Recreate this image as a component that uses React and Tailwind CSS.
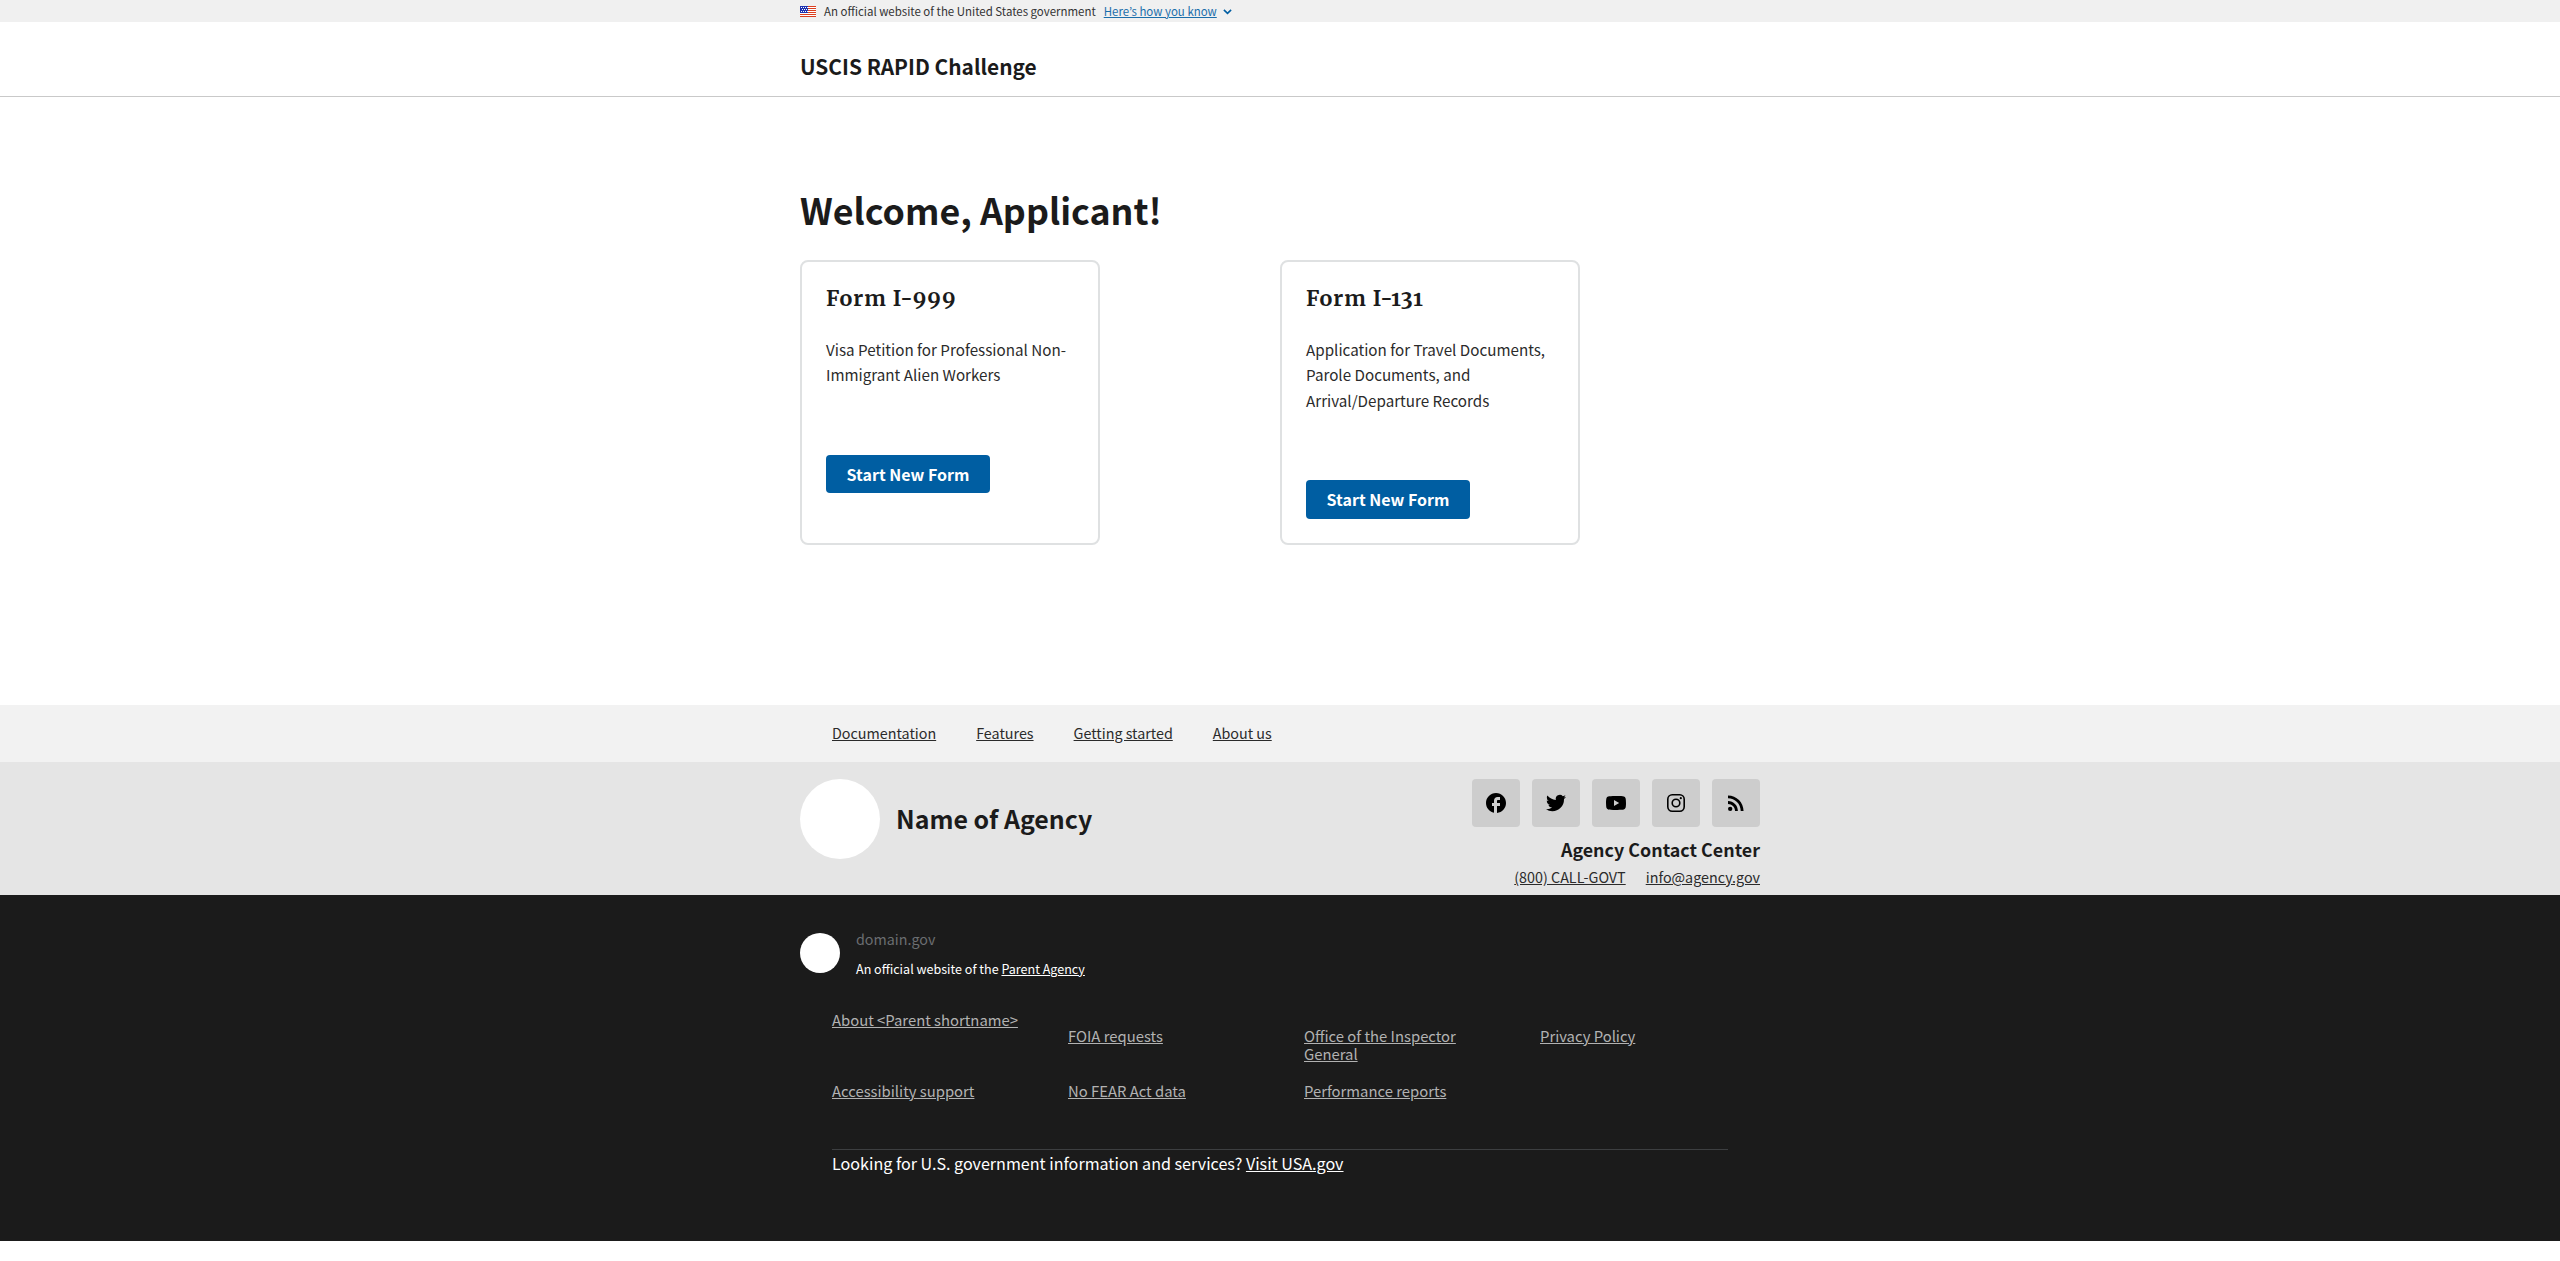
import clsx from "clsx";

const footerNav = ["Documentation", "Features", "Getting started", "About us"];

const requiredLinks = [
  { label: "About <Parent shortname>", first: true },
  { label: "FOIA requests" },
  { label: "Office of the Inspector General" },
  { label: "Privacy Policy" },
  { label: "Accessibility support" },
  { label: "No FEAR Act data" },
  { label: "Performance reports" },
];

const forms = [
  { id: "999", text: "Visa Petition for Professional Non-Immigrant Alien Workers" },
  { id: "131", text: "Application for Travel Documents, Parole Documents, and Arrival/Departure Records" },
];

function Flag() {
  const stars = [
    [1, 1], [3, 1], [5, 1], [7, 1],
    [2, 3], [4, 3], [6, 3],
    [1, 5], [3, 5], [5, 5], [7, 5],
  ];
  return (
    <svg width="16" height="11" viewBox="0 0 16 11" shapeRendering="crispEdges" aria-hidden="true">
      <rect width="16" height="11" fill="#fff" />
      {[0, 2, 4, 6, 8, 10].map((y) => (
        <rect key={y} y={y} width="16" height="1" fill="#db3e1f" />
      ))}
      <rect width="8" height="7" fill="#1e33b1" />
      {stars.map(([x, y]) => (
        <rect key={x + "-" + y} x={x} y={y} width="1" height="1" fill="#fff" />
      ))}
    </svg>
  );
}

const icons = {
  Facebook: (
    <path d="M22 12c0-5.52-4.48-10-10-10S2 6.48 2 12c0 4.84 3.44 8.87 8 9.8V15H8v-3h2V9.5C10 7.57 11.57 6 13.5 6H16v3h-2c-.55 0-1 .45-1 1v2h3v3h-3v6.95c5.05-.5 9-4.76 9-9.95z" />
  ),
  Twitter: (
    <path d="M22 5.8a8.49 8.49 0 0 1-2.36.64 4.13 4.13 0 0 0 1.81-2.27 8.21 8.21 0 0 1-2.61 1 4.1 4.1 0 0 0-7 3.74 11.64 11.64 0 0 1-8.45-4.29 4.16 4.16 0 0 0-.55 2.07 4.09 4.09 0 0 0 1.82 3.41 4.05 4.05 0 0 1-1.86-.51v.05a4.1 4.1 0 0 0 3.3 4 3.93 3.93 0 0 1-1.1.17 4.9 4.9 0 0 1-.77-.07 4.11 4.11 0 0 0 3.83 2.84A8.22 8.22 0 0 1 3 18.34a7.93 7.93 0 0 1-1-.06 11.57 11.57 0 0 0 6.29 1.85A11.59 11.59 0 0 0 20 8.45v-.53a8.43 8.43 0 0 0 2-2.12z" />
  ),
  YouTube: (
    <path d="M10 15l5.19-3L10 9v6m11.56-7.83c.13.47.22 1.1.28 1.9.07.8.1 1.49.1 2.09L22 12c0 2.19-.16 3.8-.44 4.83-.25.9-.83 1.48-1.73 1.73-.47.13-1.33.22-2.65.28-1.3.07-2.49.1-3.59.1L12 19c-4.19 0-6.8-.16-7.83-.44-.9-.25-1.48-.83-1.73-1.73-.13-.47-.22-1.1-.28-1.9-.07-.8-.1-1.49-.1-2.09L2 12c0-2.19.16-3.8.44-4.83.25-.9.83-1.48 1.73-1.73.47-.13 1.33-.22 2.65-.28 1.3-.07 2.49-.1 3.59-.1L12 5c4.19 0 6.8.16 7.83.44.9.25 1.48.83 1.73 1.73z" />
  ),
  Instagram: (
    <>
      <rect x="3.8" y="3.8" width="16.4" height="16.4" rx="4.4" fill="none" stroke="currentColor" strokeWidth="1.6" />
      <circle cx="12" cy="12" r="3.8" fill="none" stroke="currentColor" strokeWidth="1.6" />
      <circle cx="16.8" cy="7.2" r="1.1" />
    </>
  ),
  RSS: (
    <>
      <circle cx="6.18" cy="17.82" r="2.18" />
      <path d="M4 4.44v2.83c7.03 0 12.73 5.7 12.73 12.73h2.83c0-8.59-6.97-15.56-15.56-15.56zm0 5.66v2.83c3.9 0 7.07 3.17 7.07 7.07h2.83c0-5.47-4.43-9.9-9.9-9.9z" />
    </>
  ),
};

function Banner() {
  return (
    <section className="h-[22px] bg-[#f0f0f0]">
      <div className="mx-auto flex h-full w-[960px] items-center text-[11.46px] leading-[22px]">
        <span className="mr-2 pt-px">
          <Flag />
        </span>
        <p className="mr-2 text-[#333333]">An official website of the United States government</p>
        <a className="text-[#1a6eab] underline" href="#banner">Here’s how you know</a>
        <svg className="ml-[6px] mt-[2px]" width="9" height="6" viewBox="0 0 9 6" fill="none" stroke="#005ea2" strokeWidth="1.6" aria-hidden="true">
          <path d="M0.9 0.9 4.5 4.4 8.1 0.9" />
        </svg>
      </div>
    </section>
  );
}

function Header() {
  return (
    <header className="border-b border-[#c9c9c9] pt-[30px] pb-4">
      <div className="mx-auto w-[960px] text-[20.87px] leading-7 font-bold">USCIS RAPID Challenge</div>
    </header>
  );
}

function FormCard({ id, text }) {
  return (
    <article className="h-[285px] w-[300px] rounded-lg border-2 border-[#dfe1e2] px-6 pt-[23px]">
      <h2 className="font-['Merriweather','Noto_Serif',serif] text-[21.44px] leading-7 font-bold tracking-[0.95px] [font-feature-settings:'onum']">
        Form I-{id}
      </h2>
      <p className="mt-6 text-[15.19px] leading-[25.44px] text-[#2b2b2b]">{text}</p>
      <button className="mt-[67px] block h-[38.2px] w-[164px] rounded bg-[#005ea2] text-base leading-none font-bold text-white">
        Start New Form
      </button>
    </article>
  );
}

function Footer() {
  return (
    <footer>
      <nav className="h-[57px] bg-[#f2f2f2]">
        <div className="mx-auto flex h-14 w-[960px] items-center gap-10 px-8 text-[14.33px] leading-6 text-[#2b2b2b]">
          {footerNav.map((label) => (
            <a key={label} className="underline" href="#footer">{label}</a>
          ))}
        </div>
      </nav>

      <div className="h-[133px] bg-[#e5e5e5] pt-[17px]">
        <div className="mx-auto flex w-[960px] items-start justify-between">
          <div className="flex h-20 items-center gap-4">
            <div className="size-20 rounded-full bg-white" />
            <h3 className="pb-0.5 text-[24.93px] leading-8 font-bold">Name of Agency</h3>
          </div>
          <div className="flex flex-col items-end">
            <div className="flex gap-3">
              {Object.entries(icons).map(([name, glyph]) => (
                <a key={name} aria-label={name} href="#social" className="flex size-12 items-center justify-center rounded bg-[#cdcdcd] text-black">
                  <svg width="24" height="24" viewBox="0 0 24 24" fill="currentColor">{glyph}</svg>
                </a>
              ))}
            </div>
            <p className="mt-2.5 text-[17.86px] leading-6 font-bold">Agency Contact Center</p>
            <div className="mt-1 flex gap-5 text-[14.33px] leading-6 text-[#2b2b2b]">
              <a className="underline" href="#phone">(800) CALL-GOVT</a>
              <a className="underline" href="#email">info@agency.gov</a>
            </div>
          </div>
        </div>
      </div>

      <div className="h-[346px] bg-[#1b1b1b] pt-8">
        <div className="mx-auto w-[960px]">
          <div className="flex gap-4">
            <div className="mt-1.5 size-10 rounded-full bg-white" />
            <div>
              <p className="text-[14.3px] leading-6 text-[#6b6e71]">domain.gov</p>
              <p className="mt-[7px] text-[12.55px] leading-[22px] text-white">
                An official website of the <a className="underline" href="#parent">Parent Agency</a>
              </p>
            </div>
          </div>

          <ul className="mt-[31px] ml-8 grid w-[944px] grid-cols-[repeat(4,236px)] text-[14.84px] leading-[18px] text-[#b2b2b2]">
            {requiredLinks.map(({ label, first }) => (
              <li key={label} className={clsx("h-[55px] pr-16", first ? "pt-0 whitespace-nowrap" : "pt-4")}>
                <a className="underline" href="#required">{label}</a>
              </li>
            ))}
          </ul>

          <div className="mx-8 mt-[28px] border-t border-[#3d3f41] text-[16.13px] leading-[27px] text-white">
            Looking for U.S. government information and services?{" "}
            <a className="underline" href="#usa">Visit USA.gov</a>
          </div>
        </div>
      </div>
    </footer>
  );
}

export default function App() {
  return (
    <div className="min-h-[1261px] bg-white font-['Noto_Sans_CJK_JP',sans-serif] text-[#1b1b1b]">
      <Banner />
      <Header />
      <main className="mx-auto h-[608px] w-[960px] pt-[93px]">
        <h1 className="text-[35.77px] leading-10 font-bold">Welcome, Applicant!</h1>
        <div className="mt-[30px] grid grid-cols-2">
          {forms.map((form) => (
            <FormCard key={form.id} {...form} />
          ))}
        </div>
      </main>
      <Footer />
    </div>
  );
}
